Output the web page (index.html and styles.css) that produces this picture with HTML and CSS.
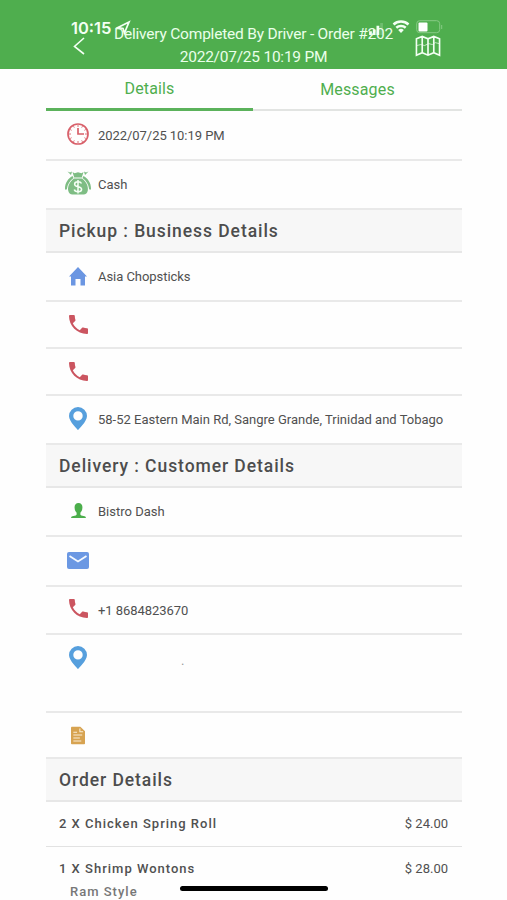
FILE: index.html
```html
<!DOCTYPE html>
<html lang="en">
<head>
<meta charset="utf-8">
<title>Order details</title>
<link rel="stylesheet" href="styles.css">
</head>
<body>
<svg class="defs" aria-hidden="true">
  <symbol id="phone" viewBox="3 3 18 18"><path d="M6.620 10.790c1.440 2.830 3.760 5.140 6.590 6.590l2.200-2.200c.27-.27.67-.36 1.020-.24 1.120.37 2.330.57 3.570.57.55 0 1 .45 1 1V20c0 .55-.45 1-1 1-9.390 0-17-7.610-17-17 0-.55.45-1 1-1h3.500c.55 0 1 .45 1 1 0 1.250.2 2.450.57 3.570.11.35.03.74-.25 1.020l-2.200 2.200z"/></symbol>
  <symbol id="pin" viewBox="0 0 18 23"><path fill-rule="evenodd" d="M9 0a9 9 0 0 0-9 9c0 5.600 9 14 9 14s9-8.400 9-14a9 9 0 0 0-9-9zm0 4.200a4.700 4.700 0 1 1 0 9.400 4.700 4.700 0 0 1 0-9.400z"/></symbol>
</svg>
<header class="header">
  <div class="status">
    <span class="clock">10:15</span>
    <svg class="arrow" viewBox="0 0 14 14"><path d="M1 7 13 1 8 13 6.500 8z"/></svg>
    <svg class="signal" viewBox="0 0 16 13"><path d="M0 9h3v4H0zM4 7h3v6H4zM8 3h3v10H8z"/><path opacity=".2" d="M12 0h3v13h-3z"/></svg>
    <svg class="wifi" viewBox="0 0 18 13"><path d="M1.500 4.500a11 11 0 0 1 15 0M4.300 7.700a7 7 0 0 1 9.400 0"/><path class="solid" d="M6.200 10a4.200 4.200 0 0 1 5.600 0L9 13z"/></svg>
    <svg class="battery" viewBox="0 0 27 14"><rect class="shell" x=".7" y=".7" width="23" height="12" rx="3"/><path class="shell" d="M25.700 5v4"/><rect class="level" x="2.500" y="2.500" width="9" height="9" rx="1"/></svg>
  </div>
  <svg class="back" viewBox="0 0 12 18"><path d="M11 1 1.500 9.500 11 17"/></svg>
  <h1 class="title"><span class="order">Delivery Completed By Driver - Order #202</span><span class="stamp">2022/07/25 10:19 PM</span></h1>
  <svg class="map" viewBox="0 0 27 22"><path d="M1.500 3.500 7.500 1l6 2.500 6-2.500 6 2.500v17L19.500 18l-6 2.500-6-2.500-6 2.500zM7.500 1v17M13.500 3.500v17M19.500 1v17"/><path class="thin" d="M2 10.500l4-1 4 1 4-2 4 1 3-2 4 1"/></svg>
</header>
<main class="page">
  <nav class="tabs"><a class="tab active">Details</a><a class="tab messages">Messages</a></nav>
  <div class="row h50"><span class="icon"><svg class="clock-icon" viewBox="0 0 22 22"><circle cx="11" cy="11" r="10"/><path d="M11 5v6h6"/><path class="ticks" d="M11 2v2M11 18v2M2 11h2M18 11h2M6.500 3.200l.8 1.400M15.500 3.200l-.8 1.400M3.200 6.500l1.400.8M3.200 15.500l1.400-.8M6.500 18.800l.8-1.400M15.500 18.800l-.8-1.400M18.800 15.500l-1.400-.8M18.800 6.500l-1.400.8"/></svg></span><span class="tight">2022/07/25 10:19 PM</span></div>
  <div class="row h49"><span class="icon"><svg class="cash-icon" viewBox="0 0 26 24"><path d="M7.500 1l2 1.200 3.500-1 3.500 1 2-1.200-1.700 5.500h-7.600zM9 7.500h8c4.500 3.500 6.500 8 5.800 12-.5 2.500-2 4-4.300 4h-11c-2.300 0-3.800-1.500-4.300-4C2.500 15.500 4.500 11 9 7.500z"/><path d="M7.500 5C3 7.500 0 12 0 17.500c0 1.300 1.300 1.800 1.900.5C2.500 13.500 4.500 10 8.500 7zM18.500 5c4.500 2.500 7.500 7 7.500 12.500 0 1.300-1.300 1.800-1.900.5-.6-4.500-2.600-8-6.600-11zM2.500.5l2.500 1 2-1L6 4zM23.500.5l-2.500 1-2-1L20 4z"/><path class="dollar" d="M16.500 12.500c-.5-1.200-1.800-1.700-3.500-1.700-2 0-3.400.9-3.400 2.400 0 3.500 7 1.500 7 5 0 1.600-1.500 2.500-3.500 2.500s-3.500-.8-3.800-2.200M13 9v13.500"/></svg></span><span>Cash</span></div>
  <h2 class="section">Pickup : Business Details</h2>
  <div class="row h49"><span class="icon"><svg class="house" viewBox="0 0 18 19"><path d="M9 0l9 9.500h-2V18.500h-4.500v-6.500h-5v6.500H2V9.500H0z"/></svg></span><span class="tight">Asia Chopsticks</span></div>
  <div class="row h47"><span class="icon"><svg class="phone"><use href="#phone"/></svg></span></div>
  <div class="row h47"><span class="icon"><svg class="phone"><use href="#phone"/></svg></span></div>
  <div class="row h49"><span class="icon pin-box"><svg class="pin"><use href="#pin"/></svg></span><span>58-52 Eastern Main Rd, Sangre Grande, Trinidad and Tobago</span></div>
  <h2 class="section">Delivery : Customer Details</h2>
  <div class="row h49"><span class="icon"><svg class="person" viewBox="0 0 16 17"><path d="M8 0c2.700 0 4.200 1.800 4.200 4.600 0 2.300-.9 4.500-2.200 5.700v1.900c0 .6.400.8 1 1l3.500 1c.9.300 1.300.8 1.400 1.800H.1c.1-1 .5-1.500 1.400-1.800l3.500-1c.6-.2 1-.4 1-1v-1.900C4.700 9.100 3.800 6.900 3.800 4.600 3.800 1.800 5.300 0 8 0z"/></svg></span><span>Bistro Dash</span></div>
  <div class="row h50"><span class="icon"><svg class="mail" viewBox="0 0 22 17" preserveAspectRatio="none"><rect width="22" height="17" rx="2"/><path d="M2.500 4 11 9.500 19.500 4"/></svg></span></div>
  <div class="row h48"><span class="icon"><svg class="phone call"><use href="#phone"/></svg></span><span class="tight">+1 8684823670</span></div>
  <div class="row h78 tall"><span class="icon"><svg class="pin"><use href="#pin"/></svg></span><span class="dot">.</span></div>
  <div class="row h46"><span class="icon"><svg class="note" viewBox="0 0 15 19"><path class="sheet" d="M1.200 0H10l5 5v12.800c0 .7-.5 1.200-1.200 1.200H1.200C.5 19 0 18.500 0 17.800V1.200C0 .5.500 0 1.200 0z"/><path class="lines" d="M9.500 2v3.500H13M2.500 6h4M2.500 9h9.500M2.500 12.200h7M2.500 15.300h8.500"/></svg></span></div>
  <h2 class="section">Order Details</h2>
  <div class="item h45"><span class="name">2 X Chicken Spring Roll</span><span class="price">$ 24.00</span></div>
  <div class="item"><span class="name">1 X Shrimp Wontons<small class="option">Ram Style</small></span><span class="price">$ 28.00</span></div>
</main>
<div class="home-bar"></div>
</body>
</html>
```
FILE: styles.css
```css
* { box-sizing: border-box; }
html, body { height: 100%; }
body { margin: 0; overflow: hidden; position: relative; background: #fefefe; color: #505050; font-family: Roboto, "Liberation Sans", sans-serif; font-size: 13px; }
svg { display: block; flex: none; overflow: visible; }
.defs { position: absolute; width: 0; height: 0; }
.header { position: relative; height: 69px; background: #4fae4e; }
.status { position: absolute; inset: 0; color: #f3fff3; }
.clock { position: absolute; left: 71px; top: 18px; font: 600 16.5px/20px Inter, sans-serif; }
.arrow, .signal, .wifi, .battery, .back, .map { position: absolute; fill: none; stroke: #f3fff3; }
.arrow { left: 117px; top: 21px; width: 13px; height: 13px; stroke-width: 1.8; }
.signal { left: 368px; top: 23px; width: 17px; height: 12px; fill: #f3fff3; stroke: none; }
.wifi { left: 392px; top: 20px; width: 18px; height: 13px; stroke-width: 2.5; }
.wifi .solid { fill: #f3fff3; stroke: none; }
.battery { left: 416px; top: 20px; width: 27px; height: 14px; }
.battery .shell { stroke: #87ca85; }
.battery .level { fill: #fff; stroke: none; }
.back { left: 73px; top: 37px; width: 12px; height: 18px; stroke-width: 1.6; }
.map { left: 415px; top: 35px; width: 26px; height: 22px; stroke-width: 1.7; }
.map .thin { stroke-width: .7; }
.title { display: flex; flex-direction: column; align-items: center; margin: 0; padding-top: 23px; font-size: 15.5px; line-height: 23px; font-weight: 400; color: #eaffea; }
.order { letter-spacing: -.21px; }
.stamp { letter-spacing: -.24px; }
.page { width: 416px; margin-left: 46px; }
.tabs { display: flex; height: 42px; color: #4fae4e; font-size: 16px; line-height: 39px; text-align: center; letter-spacing: .15px; }
.tab { width: 207px; border-bottom: 3px solid #5bb25b; }
.messages { flex: 1; line-height: 41px; border-bottom: 2px solid #e2e4e2; }
.row { display: flex; align-items: center; border-bottom: 2px solid #e9e9e9; }
.tight { letter-spacing: -.05px; }
.icon { display: flex; justify-content: center; width: 26px; margin: 0 7px 0 19px; }
.h45 { height: 45px; }
.h46 { height: 46px; }
.h47 { height: 47px; }
.h48 { height: 48px; }
.h49 { height: 49px; }
.h50 { height: 50px; }
.h78 { height: 78px; }
.section { display: flex; align-items: center; height: 43px; margin: 0; padding-left: 13px; border-bottom: 2px solid #e7e7e7; background: #f7f7f7; font-size: 17.5px; font-weight: 500; letter-spacing: .93px; color: #4d4d4d; }
.row + .section { padding-top: 1px; }
.clock-icon { width: 22px; height: 22px; margin-top: -2px; fill: none; stroke: #d8606a; stroke-width: 1.7; }
.ticks { stroke-width: .9; }
.cash-icon { width: 26px; height: 24px; margin-top: -3px; fill: #7ebd84; }
.dollar { fill: none; stroke: #f5fff5; stroke-width: 1.5; }
.house { width: 18px; height: 19px; margin-top: -1px; fill: #6b96e2; }
.phone { width: 19px; height: 19px; fill: #cb5560; }
.call { margin-top: -3px; }
.pin { width: 18px; height: 23px; fill: #569fdd; }
.pin-box { padding-bottom: 3px; }
.person { width: 15px; height: 16px; margin-top: -2px; fill: #4bae4b; }
.mail { width: 22px; height: 17px; margin-top: -2px; fill: #6b98e3; }
.mail path { fill: none; stroke: #f4f9ff; stroke-width: 1.8; }
.note { width: 14px; height: 19px; fill: #d7a351; }
.lines { fill: none; stroke: #fbeed7; stroke-width: 1.1; }
.tall { align-items: flex-start; padding-top: 11px; }
.dot { margin: 7px 0 0 83px; color: #999; }
.item { display: flex; justify-content: space-between; padding: 13px 14px 0 13px; line-height: 17px; }
.item.h45 { border-bottom: 1px solid #e2e2e2; }
.name { font-weight: 500; letter-spacing: 1px; }
.option { display: block; padding: 6px 0 0 11px; font-size: 13px; color: #777; }
.price { letter-spacing: 0; }
.home-bar { position: absolute; left: 180px; top: 886px; width: 148px; height: 5px; border-radius: 3px; background: #000; }
```
